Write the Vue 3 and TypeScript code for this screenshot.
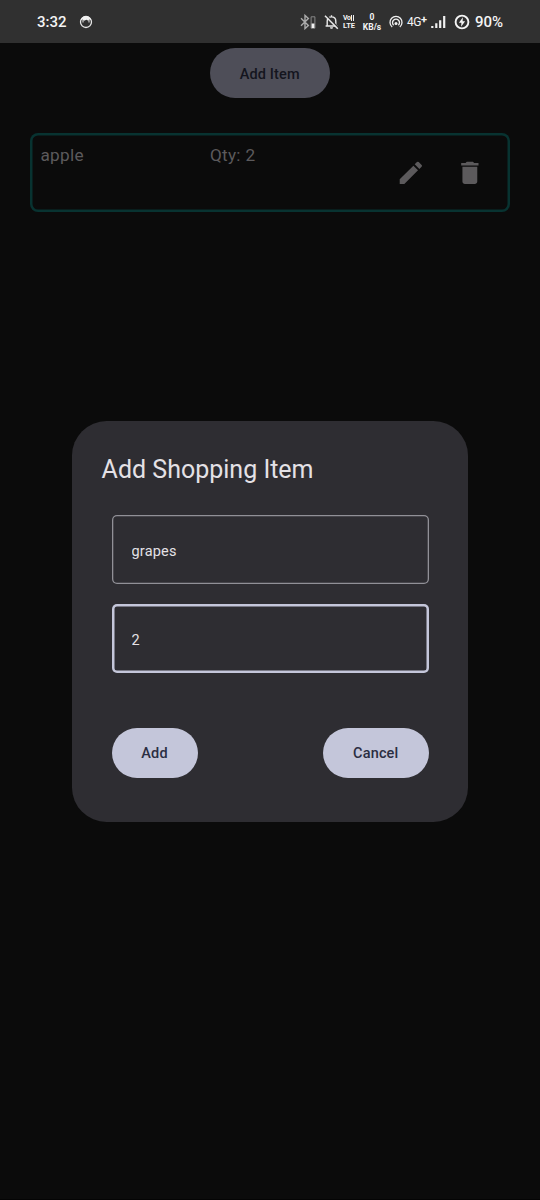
<script setup lang="ts">
import { ref } from 'vue'

interface ShoppingItem {
  id: number
  name: string
  quantity: number
}

const items = ref<ShoppingItem[]>([{ id: 1, name: 'apple', quantity: 2 }])
const showDialog = ref(true)
const itemName = ref('grapes')
const itemQuantity = ref('2')

function addItem(): void {
  if (!itemName.value.trim()) return
  items.value.push({
    id: items.value.length + 1,
    name: itemName.value,
    quantity: Number(itemQuantity.value) || 1,
  })
  itemName.value = ''
  showDialog.value = false
}

function removeItem(id: number): void {
  items.value = items.value.filter((item) => item.id !== id)
}
</script>

<template>
  <div class="screen">
    <header class="status">
      <span class="clock">3:32</span>
      <svg class="face" viewBox="0 0 14 14">
        <circle cx="7" cy="7" r="5.5" fill="none" stroke="#e6e6e6" stroke-width="1.3" />
        <path d="M1.600 5.600C2.300 2.500 4.400 1 7 1s4.700 1.500 5.400 4.600L10.500 4.600 9.300 5.800 7.500 4.800 5 5.700 3.500 4.600Z" fill="#f0f0f0" />
        <path d="M4 5v2.500M10 5v2.500" stroke="#ccc" stroke-width="1.200" />
      </svg>
      <svg class="bluetooth" viewBox="0 0 16 16">
        <path d="M1 4.300 8.400 11.500 5 14.600V1.400L8.400 4.500 1 11.700" fill="none" stroke="#aaa" stroke-width="1.400" />
        <path d="M11.100 2.800h3.800v11.400h-3.800z" fill="none" stroke="#888" stroke-width="1" />
        <path d="M11.600 9.500h2.800V14h-2.800z" fill="#f0f0f0" />
      </svg>
      <svg class="bell" viewBox="0 0 15 16">
        <path d="M3.200 11.700V7.200c0-2.300 1.500-4.300 4.300-4.300s4.300 2 4.300 4.300v4.500M1.600 12h11.800M7.500 1.300v1.500" fill="none" stroke="#e8e8e8" stroke-width="1.400" />
        <path d="M6 13.300h3c0 1-.6 1.500-1.500 1.500S6 14.300 6 13.300Z" fill="#e8e8e8" />
        <path d="M2 1.100 14.600 14" stroke="#303030" stroke-width="1.600" />
        <path d="M1 1.800 13.800 14.800" stroke="#e8e8e8" stroke-width="1.500" />
      </svg>
      <span class="volte"><span class="vol">Vo<i></i></span><span class="lte">LTE</span></span>
      <span class="speed"><span>0</span><span>KB/s</span></span>
      <svg class="hotspot" viewBox="0 0 14 14">
        <path d="M3.200 12A6 6 0 1 1 10.800 12M4.600 10.200A3.500 3.500 0 1 1 9.400 10.200" fill="none" stroke="#f0f0f0" stroke-width="1.300" />
        <circle cx="7" cy="8.500" r="1.500" fill="#f0f0f0" />
      </svg>
      <span class="network">4G<b>+</b></span>
      <svg class="signal" viewBox="0 0 15 14">
        <path d="M1.300 11v2M5.300 8.300V13M9.200 5.300V13M13.200 1v12" stroke="#f0f0f0" stroke-width="2.200" />
      </svg>
      <svg class="charge" viewBox="0 0 16 16">
        <circle cx="8" cy="8" r="6.400" fill="none" stroke="#f4f4f4" stroke-width="1.900" />
        <path d="M8.900 3.200 4.900 8.800h2.500l-.3 4 4-5.600H8.600Z" fill="#f4f4f4" />
      </svg>
      <span class="battery">90%</span>
    </header>

    <main class="page">
      <button class="pill open" @click="showDialog = true">Add Item</button>
      <ul class="list">
        <li v-for="item in items" :key="item.id" class="row">
          <span class="name">{{ item.name }}</span>
          <span class="qty">Qty: {{ item.quantity }}</span>
          <div class="actions">
            <button class="icon" aria-label="Edit">
              <svg viewBox="0 0 24 24"><path d="M3 17.250V21h3.750L17.810 9.940l-3.750-3.750L3 17.250zM20.710 7.040a1 1 0 0 0 0-1.410l-2.340-2.340a1 1 0 0 0-1.410 0l-1.830 1.830 3.750 3.750 1.830-1.830z" /></svg>
            </button>
            <button class="icon" aria-label="Delete" @click="removeItem(item.id)">
              <svg viewBox="0 0 24 24"><path d="M6 19c0 1.100.9 2 2 2h8c1.100 0 2-.9 2-2V7H6v12zM19 4h-3.500l-1-1h-5l-1 1H5v2h14V4z" /></svg>
            </button>
          </div>
        </li>
      </ul>
    </main>

    <div v-if="showDialog" class="overlay">
      <section class="dialog" role="dialog">
        <h1>Add Shopping Item</h1>
        <input v-model="itemName" class="field" type="text" spellcheck="false" />
        <input v-model="itemQuantity" class="field active" type="text" />
        <div class="buttons">
          <button class="pill add" @click="addItem">Add</button>
          <button class="pill cancel" @click="showDialog = false">Cancel</button>
        </div>
      </section>
    </div>
  </div>
</template>

<style>
body {
  margin: 0;
  background: #0b0b0b;
}
</style>

<style scoped>
* {
  box-sizing: border-box;
}
.screen {
  position: relative;
  height: 1200px;
  overflow: hidden;
  background: #0b0b0b;
  border-bottom: 1px solid #040404;
  font-family: Roboto, sans-serif;
}
button {
  border: 0;
  padding: 0;
  font-family: inherit;
}
.status {
  display: flex;
  align-items: center;
  height: 43px;
  padding: 0 0 0 37px;
  background: #303030;
  color: #f4f4f4;
  white-space: nowrap;
}
.status > * {
  flex: none;
}
.clock {
  width: 42px;
  padding-top: 1px;
  font-size: 15px;
  font-weight: 500;
}
.face {
  width: 14px;
  height: 14px;
}
.bluetooth {
  width: 16px;
  height: 16px;
  margin-left: 207px;
}
.bell {
  width: 15px;
  height: 16px;
  margin-left: 8px;
}
.volte,
.speed {
  display: flex;
  flex-direction: column;
  font-weight: 700;
}
.volte {
  width: 13px;
  margin-left: 4px;
  font-size: 7px;
  line-height: 7px;
}
.vol {
  display: flex;
  letter-spacing: -0.300px;
}
.lte {
  font-size: 7.500px;
}
.vol i {
  width: 3.600px;
  height: 6px;
  border: solid #f0f0f0;
  border-width: 0 1px;
}
.speed {
  width: 20px;
  margin-left: 6px;
  align-items: center;
  font-size: 8.500px;
  line-height: 10px;
}
.hotspot {
  width: 14px;
  height: 14px;
  margin-left: 6.500px;
}
.network {
  display: flex;
  width: 20px;
  margin-left: 4.500px;
  font-size: 12px;
  line-height: 14px;
  letter-spacing: -0.500px;
}
.network b {
  font-size: 11px;
  line-height: 10px;
}
.signal {
  width: 15px;
  height: 14px;
  margin-left: 4px;
}
.charge {
  width: 16px;
  height: 16px;
  margin-left: 8px;
}
.battery {
  margin-left: 5px;
  padding-top: 1px;
  font-size: 15px;
  font-weight: 500;
}
.page {
  display: flex;
  flex-direction: column;
  align-items: center;
  padding: 5.300px 30px 0;
}
.pill {
  height: 49.500px;
  padding-top: 2px;
  border-radius: 25px;
  background: #c4c6da;
  color: #2b2e42;
  font-size: 14.500px;
  font-weight: 500;
  letter-spacing: 0.150px;
}
.open {
  width: 119.500px;
  margin-right: 0.500px;
  background: #4e4e58;
  color: #14151e;
}
.list {
  width: 480px;
  margin: 35px 0 0;
  padding: 0;
  list-style: none;
}
.row {
  display: flex;
  height: 79.200px;
  padding: 9.900px;
  border-radius: 8px;
  box-shadow: inset 0 0 0 2.500px #083331;
  color: #5c5a5c;
  font-size: 17.200px;
  line-height: 25px;
  letter-spacing: 0.300px;
}
.name {
  width: 170px;
  padding-left: 0.500px;
}
.actions {
  display: flex;
  margin: 0 0.400px 0 auto;
}
.icon {
  display: grid;
  place-items: center;
  width: 59.400px;
  height: 59.400px;
  background: none;
}
.icon svg {
  width: 29.700px;
  height: 29.700px;
  fill: #5c5a5c;
}
.overlay {
  position: absolute;
  inset: 43px 0 0;
  display: flex;
  justify-content: center;
  align-items: flex-start;
  padding-top: 378px;
}
.dialog {
  display: flex;
  flex-direction: column;
  width: 396px;
  height: 401px;
  padding: 30.500px 39.500px;
  border-radius: 34.600px;
  background: #2e2d32;
}
.dialog h1 {
  margin: 0 0 27.300px -9.900px;
  color: #e4e1e6;
  font-size: 25px;
  line-height: 36px;
  font-weight: 400;
  white-space: nowrap;
}
.field {
  width: 317px;
  height: 69.500px;
  margin: 0 0 19.700px;
  padding: 3px 20px 0;
  border: 0;
  outline: 0;
  border-radius: 5px;
  background: none;
  box-shadow: inset 0 0 0 1.300px #919097;
  color: #e4e1e6;
  font: 400 14.500px Roboto, sans-serif;
  letter-spacing: 0.200px;
}
.active {
  box-shadow: inset 0 0 0 2.500px #c4c6da;
}
.buttons {
  display: flex;
  justify-content: space-between;
  margin-top: 35px;
}
.add {
  width: 86px;
}
.cancel {
  width: 105.500px;
}
</style>
